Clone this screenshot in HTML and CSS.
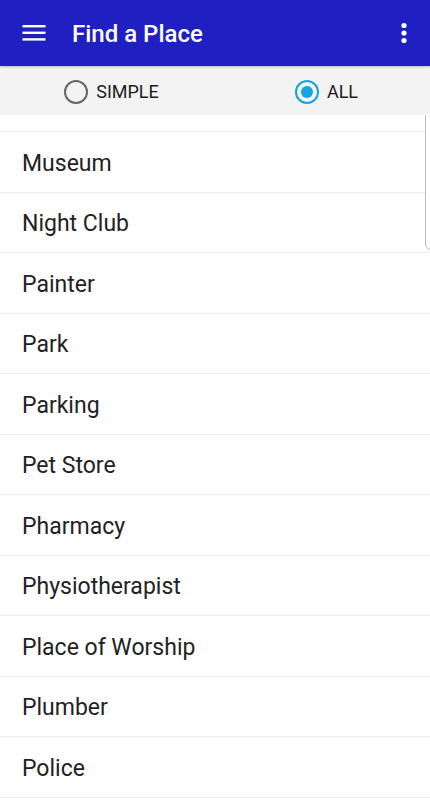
FILE: index.html
```html
<!DOCTYPE html>
<html lang="en">
  <head>
    <meta charset="UTF-8" />
    <meta name="viewport" content="width=device-width, initial-scale=1.0" />
    <title>Find a Place</title>
    <link rel="stylesheet" href="styles.css">
  </head>
  <body>
    <header class="app-bar">
      <button class="icon-btn menu-btn" aria-label="Menu">
        <svg width="24" height="24" viewBox="0 0 24 24">
          <rect x="0.5" y="4" width="23" height="2.4" fill="#fff" />
          <rect x="0.5" y="10.6" width="23" height="2.4" fill="#fff" />
          <rect x="0.5" y="17.2" width="23" height="2.4" fill="#fff" />
        </svg>
      </button>
      <h1 class="title">Find a Place</h1>
      <button class="icon-btn more-btn" aria-label="More">
        <svg width="8" height="24" viewBox="0 0 8 24">
          <circle cx="4" cy="4.5" r="2.6" fill="#fff" />
          <circle cx="4" cy="12" r="2.6" fill="#fff" />
          <circle cx="4" cy="19.5" r="2.6" fill="#fff" />
        </svg>
      </button>
    </header>

    <form class="mode-bar">
      <label class="radio">
        <input type="radio" name="mode" value="simple" />
        <span class="radio-mark"></span>
        <span class="radio-text">SIMPLE</span>
      </label>
      <label class="radio">
        <input type="radio" name="mode" value="all" checked />
        <span class="radio-mark"></span>
        <span class="radio-text">ALL</span>
      </label>
    </form>

    <main class="list-wrap">
      <ul class="place-list">
        <li>Moving Company</li>
        <li>Museum</li>
        <li>Night Club</li>
        <li>Painter</li>
        <li>Park</li>
        <li>Parking</li>
        <li>Pet Store</li>
        <li>Pharmacy</li>
        <li>Physiotherapist</li>
        <li>Place of Worship</li>
        <li>Plumber</li>
        <li>Police</li>
        <li>Post Office</li>
      </ul>
      <!-- fast scroll thumb -->
      <div class="scroll-thumb"></div>
    </main>
  </body>
</html>
```

FILE: styles.css
```css
* {
  box-sizing: border-box;
}

body {
  margin: 0;
  width: 430px;
  height: 800px;
  overflow: hidden;
  background: #fff;
  font-family: Roboto, "Noto Sans", sans-serif;
  display: flex;
  flex-direction: column;
}

/* Toolbar */
.app-bar {
  height: 66px;
  flex: none;
  background-color: #2020c2;
  display: flex;
  align-items: center;
  padding: 0 14px 0 22px;
  position: relative;
  z-index: 2;
  box-shadow: 0 1px 2px rgba(0, 0, 0, 0.25);
}

.icon-btn {
  border: none;
  background: none;
  padding: 0;
  display: flex;
  align-items: center;
  justify-content: center;
  cursor: pointer;
}

.menu-btn {
  width: 24px;
  height: 24px;
  margin-top: -1px;
}

.title {
  flex: 1;
  margin: 2px 0 0 26px;
  color: #fff;
  font-size: 24px;
  font-weight: 500;
  letter-spacing: 0;
}

.more-btn {
  width: 24px;
  height: 24px;
  margin-top: -1px;
}

/* SIMPLE / ALL switch */
.mode-bar {
  height: 49px;
  flex: none;
  margin: 0;
  padding-top: 2px;
  background-color: #f3f3f3;
  display: grid;
  grid-template-columns: 1fr 1fr;
  align-items: center;
  position: relative;
  z-index: 1;
}

.radio {
  display: flex;
  align-items: center;
  justify-content: center;
  gap: 8px;
  padding-left: 8px;
  cursor: pointer;
}

.radio input {
  display: none;
}

.radio-mark {
  width: 24px;
  height: 24px;
  border-radius: 50%;
  border: 2.5px solid #666;
  position: relative;
}

.radio input:checked + .radio-mark {
  border-color: #14a3e3;
}

.radio input:checked + .radio-mark::after {
  content: "";
  position: absolute;
  top: 50%;
  left: 50%;
  width: 12px;
  height: 12px;
  border-radius: 50%;
  background-color: #14a3e3;
  transform: translate(-50%, -50%);
}

.radio-text {
  font-size: 18px;
  color: #1c1c1c;
}

/* List of place types */
.list-wrap {
  flex: 1;
  overflow: hidden;
  position: relative;
}

.place-list {
  list-style: none;
  margin: -43.5px 0 0 0;
  padding: 0;
}

.place-list li {
  height: 60.5px;
  padding: 3px 0 0 22px;
  display: flex;
  align-items: center;
  border-bottom: 1px solid #ececec;
  font-size: 23px;
  color: #1f2224;
}

.scroll-thumb {
  position: absolute;
  top: -32px;
  right: -8px;
  width: 13px;
  height: 167px;
  background: #fff;
  border: 1px solid #b9b9b9;
  border-radius: 6px;
  z-index: 3;
}
```
